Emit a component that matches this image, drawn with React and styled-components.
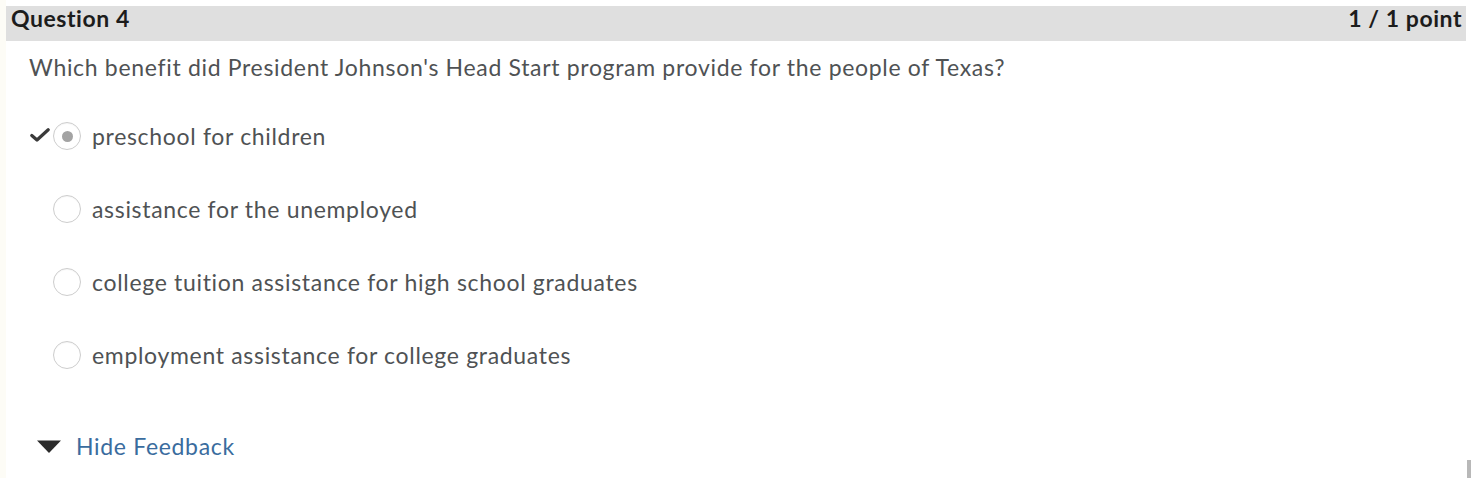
import React from "react";
import styled, { createGlobalStyle } from "styled-components";

const Global = createGlobalStyle`
  html, body { margin: 0; padding: 0; background: #ffffff; }
  body { font-family: Lato, "Open Sans", sans-serif; }
`;

const Page = styled.div`
  display: flex;
  width: 1472px;
  height: 478px;
  overflow: hidden;
  background: #ffffff;
`;

const LeftGutter = styled.div`
  width: 6px;
  flex: none;
  background: #fdfcf6;
`;

const Main = styled.div`
  flex: 1;
  display: flex;
  flex-direction: column;
  padding-top: 6px;
`;

const RightGutter = styled.div`
  width: 6px;
  flex: none;
  display: flex;
  flex-direction: column;
  justify-content: flex-end;
  align-items: flex-end;
`;

const ScrollThumb = styled.div`
  width: 4px;
  height: 18px;
  margin-right: 1px;
  background: #b8b8b8;
`;

const Header = styled.div`
  display: flex;
  justify-content: space-between;
  align-items: flex-start;
  height: 35px;
  box-sizing: border-box;
  padding: 1px 4px 0 5px;
  background: #dfdfdf;
  color: #1c1c1c;
  font-weight: 700;
  font-size: 23px;
  line-height: 23px;
  letter-spacing: 0.55px;
`;

const Prompt = styled.p`
  margin: 13px 0 0 23px;
  font-size: 23px;
  line-height: 26px;
  letter-spacing: 0.68px;
  color: #4f5254;
`;

const Options = styled.div`
  display: flex;
  flex-direction: column;
  gap: 45px;
  margin-top: 42px;
`;

const Option = styled.div`
  display: flex;
  align-items: center;
  height: 28px;
`;

const Mark = styled.div`
  width: 23px;
  margin-left: 24px;
  display: flex;
  align-items: center;
  margin-top: -3px;
`;

const Radio = styled.span`
  width: 28px;
  height: 28px;
  flex: none;
  border-radius: 50%;
  border: 1px solid #cdcdcd;
  box-shadow: inset 0 1px 1px rgba(0, 0, 0, 0.04);
  background: #ffffff;
  display: flex;
  align-items: center;
  justify-content: center;
  box-sizing: border-box;
  margin-right: 11px;
  &::after {
    content: "";
    display: ${(p) => (p.$checked ? "block" : "none")};
    width: 11px;
    height: 11px;
    border-radius: 50%;
    background: #a3a3a3;
  }
`;

const Label = styled.span`
  font-size: 23px;
  letter-spacing: 0.68px;
  color: #4f5254;
`;

const Feedback = styled.div`
  display: flex;
  align-items: center;
  gap: 15px;
  margin: 64px 0 0 31px;
  font-size: 23px;
  line-height: 26px;
  letter-spacing: 0.68px;
  color: #3a6c9e;
`;

const options = [
  { text: "preschool for children", checked: true, correct: true },
  { text: "assistance for the unemployed" },
  { text: "college tuition assistance for high school graduates" },
  { text: "employment assistance for college graduates" },
];

export default function App() {
  return (
    <Page>
      <Global />
      <LeftGutter />
      <Main>
        <Header>
          <span>Question 4</span>
          <span>1 / 1 point</span>
        </Header>
        <Prompt>
          Which benefit did President Johnson's Head Start program provide for
          the people of Texas?
        </Prompt>
        <Options>
          {options.map((o) => (
            <Option key={o.text}>
              <Mark>
                {o.correct && (
                  <svg width="20" height="14" viewBox="0 0 20 14">
                    <path
                      d="M1.8 7.5 L7 12 L18.2 1.8"
                      fill="none"
                      stroke="#3a3a3a"
                      strokeWidth="3.2"
                      strokeLinecap="round"
                      strokeLinejoin="round"
                    />
                  </svg>
                )}
              </Mark>
              <Radio $checked={o.checked} />
              <Label>{o.text}</Label>
            </Option>
          ))}
        </Options>
        <Feedback>
          <svg width="24" height="13" viewBox="0 0 24 13">
            <path d="M0 0.5 H24 L12 13 Z" fill="#2b2b2b" />
          </svg>
          <span>Hide Feedback</span>
        </Feedback>
      </Main>
      <RightGutter>
        <ScrollThumb />
      </RightGutter>
    </Page>
  );
}
